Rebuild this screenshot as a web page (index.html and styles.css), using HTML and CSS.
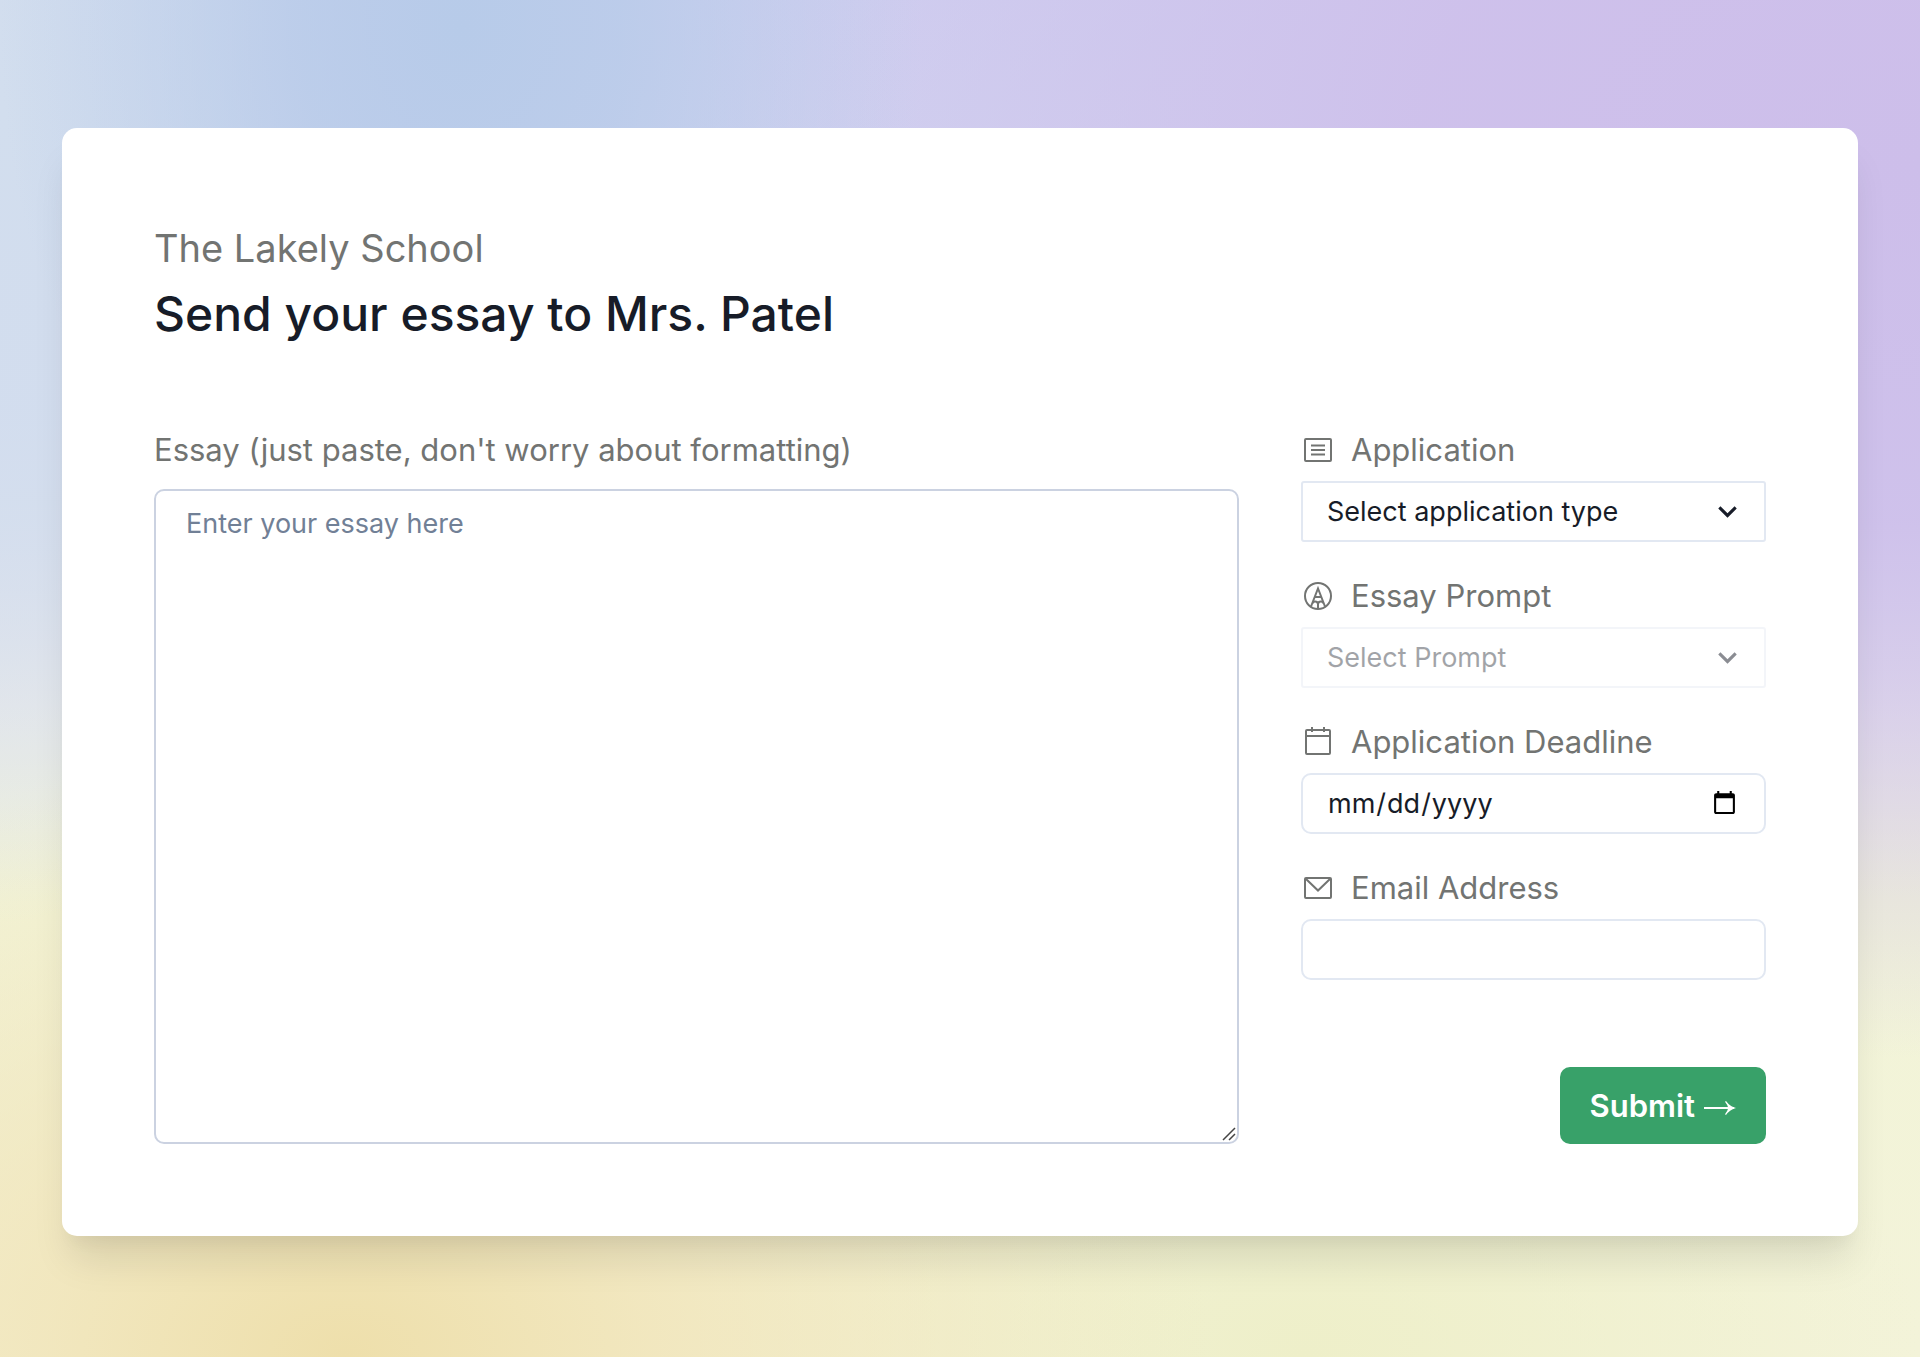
FILE: index.html
```html
<!DOCTYPE html>
<html lang="en">
<head>
<meta charset="utf-8">
<meta name="viewport" content="width=device-width, initial-scale=1">
<title>Send your essay to Mrs. Patel</title>
<link rel="stylesheet" href="styles.css">
</head>
<body>
<main class="card">
  <header class="heading">
    <p class="school">The Lakely School</p>
    <h1 class="title">Send your essay to Mrs. Patel</h1>
  </header>
  <form class="form">
    <div class="essay">
      <label class="label" for="essay">Essay (just paste, don't worry about formatting)</label>
      <textarea class="control essay-input" id="essay" placeholder="Enter your essay here"></textarea>
    </div>
    <div class="details">
      <div class="field">
        <label class="label" for="application">
          <svg class="icon" viewBox="0 0 32 32" aria-hidden="true"><rect x="4" y="5" width="26" height="22" rx="1"/><path d="M10 11.500h14M10 16h14M10 20.500h14"/></svg>
          Application
        </label>
        <div class="select-wrap">
          <select class="control select" id="application"><option>Select application type</option></select>
          <svg class="chevron" viewBox="0 0 24 24" aria-hidden="true"><path d="M16.590 8.590L12 13.170 7.410 8.590 6 10l6 6 6-6z"/></svg>
        </div>
      </div>
      <div class="field">
        <label class="label" for="prompt">
          <svg class="icon" viewBox="0 0 32 32" aria-hidden="true"><circle cx="17" cy="16" r="13"/><path d="M10 26.500L17 8.500 24 26.500M13.500 17h7M11.500 23.500q.5-2 2.800-2t2.700 2.500q.4-2.500 2.700-2.500t2.800 2M17 23v6"/></svg>
          Essay Prompt
        </label>
        <div class="select-wrap is-disabled">
          <select class="control select" id="prompt" disabled><option>Select Prompt</option></select>
          <svg class="chevron" viewBox="0 0 24 24" aria-hidden="true"><path d="M16.590 8.590L12 13.170 7.410 8.590 6 10l6 6 6-6z"/></svg>
        </div>
      </div>
      <div class="field">
        <label class="label" for="deadline">
          <svg class="icon" viewBox="0 0 32 32" aria-hidden="true"><rect x="5" y="4" width="24" height="24" rx="1"/><path d="M5 10h24M11 1v5M23 1v5"/></svg>
          Application Deadline
        </label>
        <input class="control" id="deadline" type="date">
      </div>
      <div class="field">
        <label class="label" for="email">
          <svg class="icon" viewBox="0 0 32 32" aria-hidden="true"><rect x="4" y="6" width="26" height="20" rx="1"/><path d="M4.500 6.500L17 18.500 29.500 6.500"/></svg>
          Email Address
        </label>
        <input class="control" id="email" type="email">
      </div>
      <button class="submit" type="submit">
        Submit
        <svg class="arrow" viewBox="0 0 33 16" aria-hidden="true"><path class="arrow-line" d="M1 8h30"/><path class="arrow-head" d="M23 1q4 5.500 10 7q-6 1.500-10 7l-1-.8q2.500-3 3.300-6.200q-.8-3.200-3.300-6.200z"/></svg>
      </button>
    </div>
  </form>
</main>
</body>
</html>
```
FILE: styles.css
```css
*, *::before, *::after { box-sizing: border-box; }

body {
  margin: 0;
  min-height: 100vh;
  padding: 128px 62px 120px;
  font-family: Inter, "Liberation Sans", sans-serif;
  color: #171c28;
  background:
    radial-gradient(ellipse 24% 45% at 24% 2%, #b7cbe9 0%, rgba(183, 203, 233, 0.8) 35%, rgba(183, 203, 233, 0) 100%),
    radial-gradient(ellipse 22% 60% at 0% 8%, #d2deee 0%, rgba(210, 222, 238, 0.8) 50%, rgba(210, 222, 238, 0) 100%),
    radial-gradient(ellipse 65% 66% at 100% 12%, #cdbeea 0%, rgba(206, 192, 235, 0.95) 40%, rgba(206, 192, 235, 0) 100%),
    radial-gradient(ellipse 45% 45% at 18% 100%, #eedfab 0%, rgba(241, 228, 184, 0.8) 35%, rgba(242, 234, 198, 0) 100%),
    radial-gradient(ellipse 32% 30% at 68% 100%, #eeefc9 0%, rgba(238, 239, 201, 0) 100%),
    linear-gradient(#cfd0f0 0%, #d4d8f0 30%, #ecebe9 52%, #f2f4d8 66%, #f3f3d9 100%);
}

.card {
  padding: 92px;
  border-radius: 15px;
  background: #fff;
  box-shadow: 0 31px 38px -8px rgba(0, 0, 0, 0.1), 0 15px 15px -8px rgba(0, 0, 0, 0.04);
}

.heading {
  display: grid;
  gap: 8px;
  margin-bottom: 84px;
}

.school, .title { margin: 0; }

.school {
  font-size: 38px;
  line-height: 57px;
  color: #727472;
}

.title {
  font-size: 48px;
  line-height: 58px;
  font-weight: 500;
}

.form {
  display: grid;
  grid-template-columns: minmax(0, 7fr) minmax(0, 3fr);
  gap: 62px;
  min-height: 717px;
}

.essay {
  display: flex;
  flex-direction: column;
  gap: 16px;
}

.details {
  display: flex;
  flex-direction: column;
  gap: 31px;
}

.field {
  display: grid;
  gap: 8px;
}

.label {
  display: flex;
  align-items: center;
  gap: 18px;
  font-size: 31px;
  line-height: 46px;
  color: #727472;
}

.icon {
  width: 32px;
  height: 32px;
  fill: none;
  stroke: currentColor;
  stroke-width: 2;
  overflow: visible;
}

.control {
  width: 100%;
  height: 61px;
  padding: 0 24px;
  border: 2px solid #e2e8f2;
  border-radius: 10px;
  background: #fff;
  font: inherit;
  font-size: 27px;
  color: inherit;
}

.essay-input {
  flex: 1;
  padding: 14px 30px;
  border-color: #cbd2e1;
  line-height: 37px;
}

.essay-input::placeholder { color: #718096; opacity: 1; }

.essay-input::-webkit-resizer {
  background: url("data:image/svg+xml,%3Csvg xmlns='http://www.w3.org/2000/svg' viewBox='0 0 15 15'%3E%3Cpath d='M1 13L13 1M7 13L13 7' stroke='%23444' stroke-width='1.500'/%3E%3C/svg%3E") center / 100% no-repeat;
}

.select-wrap {
  display: grid;
  align-items: center;
}

.select-wrap > * { grid-area: 1 / 1; }

.select {
  appearance: none;
  border-radius: 3px;
  opacity: 1;
}

.chevron {
  justify-self: end;
  width: 37px;
  height: 37px;
  margin-right: 20px;
  fill: currentColor;
  pointer-events: none;
}

.is-disabled .select { opacity: 0.4; }
.is-disabled .chevron { opacity: 0.5; }

.submit {
  display: flex;
  align-items: center;
  align-self: flex-end;
  gap: 8px;
  height: 77px;
  margin-top: auto;
  padding: 0 30px;
  border: 0;
  border-radius: 10px;
  background: #38a169;
  font: inherit;
  font-size: 31px;
  font-weight: 600;
  color: #fff;
}

.arrow {
  width: 33px;
  height: 16px;
  margin-top: 4px;
}

.arrow-line { stroke: currentColor; stroke-width: 2; }
.arrow-head { fill: currentColor; }
```
